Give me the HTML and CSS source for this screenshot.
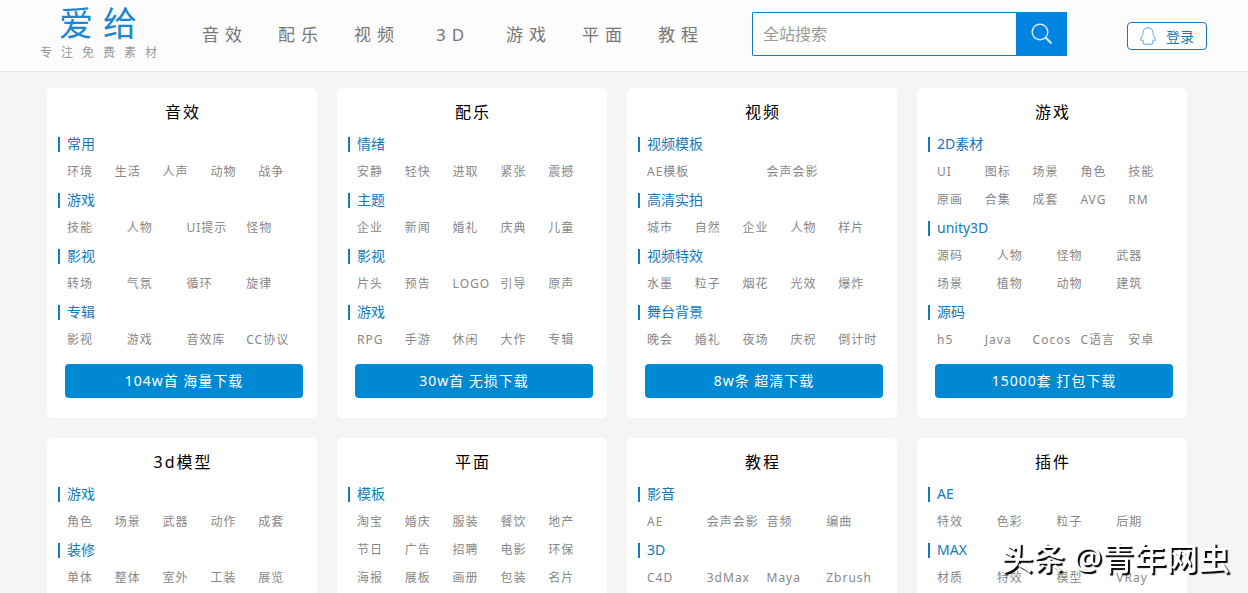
FILE: index.html
```
<!DOCTYPE html>
<html lang="zh-CN">
<head>
  <meta charset="UTF-8" />
  <meta name="viewport" content="width=device-width, initial-scale=1.0"/>
  <title>爱给 - 专注免费素材</title>
  <link rel="stylesheet" href="styles.css">
</head>
<body>

<header class="header">
  <a href="#" class="logo">
    <span class="logo-name">爱给</span>
    <span class="logo-slogan">专注免费素材</span>
  </a>
  <nav class="nav">
    <a href="#">音效</a>
    <a href="#">配乐</a>
    <a href="#">视频</a>
    <a href="#">3D</a>
    <a href="#">游戏</a>
    <a href="#">平面</a>
    <a href="#">教程</a>
  </nav>
  <form class="search">
    <input type="text" placeholder="全站搜索" aria-label="全站搜索">
    <button type="button" aria-label="搜索">
      <svg width="22" height="22" viewBox="0 0 22 22" fill="none" stroke="#d5efff">
        <circle cx="9" cy="9" r="7.8" stroke-width="1.4"/>
        <path d="M14.5 14.5L20.5 20.5" stroke-width="2"/>
      </svg>
    </button>
  </form>
  <button type="button" class="login">
    <svg width="16" height="18" viewBox="0 0 16 18" fill="none" stroke="#5aa5e0">
      <path d="M8 .8C4.900.8 3 2.800 3 5.500V7.500C2.100 9 .8 11 .8 13C.8 14.300 1.500 14.200 2.600 12.800C2.900 13.900 3.400 14.600 4 15.100C2.500 15.700 2.400 17.200 4.300 17.200H11.700C13.600 17.200 13.500 15.700 12 15.100C12.600 14.600 13.100 13.900 13.400 12.800C14.500 14.200 15.200 14.300 15.200 13C15.200 11 13.900 9 13 7.500V5.500C13 2.800 11.100.8 8 .8Z"/>
    </svg>
    登录
  </button>
</header>

<main class="cards">
  <section class="card">
    <h2>音效</h2>
    <h3>常用</h3>
    <div class="links"><a href="#">环境</a><a href="#">生活</a><a href="#">人声</a><a href="#">动物</a><a href="#">战争</a></div>
    <h3>游戏</h3>
    <div class="links four"><a href="#">技能</a><a href="#">人物</a><a href="#">UI提示</a><a href="#">怪物</a></div>
    <h3>影视</h3>
    <div class="links four"><a href="#">转场</a><a href="#">气氛</a><a href="#">循环</a><a href="#">旋律</a></div>
    <h3>专辑</h3>
    <div class="links four"><a href="#">影视</a><a href="#">游戏</a><a href="#">音效库</a><a href="#">CC协议</a></div>
    <a href="#" class="download">104w首 海量下载</a>
  </section>

  <section class="card">
    <h2>配乐</h2>
    <h3>情绪</h3>
    <div class="links"><a href="#">安静</a><a href="#">轻快</a><a href="#">进取</a><a href="#">紧张</a><a href="#">震撼</a></div>
    <h3>主题</h3>
    <div class="links"><a href="#">企业</a><a href="#">新闻</a><a href="#">婚礼</a><a href="#">庆典</a><a href="#">儿童</a></div>
    <h3>影视</h3>
    <div class="links"><a href="#">片头</a><a href="#">预告</a><a href="#">LOGO</a><a href="#">引导</a><a href="#">原声</a></div>
    <h3>游戏</h3>
    <div class="links"><a href="#">RPG</a><a href="#">手游</a><a href="#">休闲</a><a href="#">大作</a><a href="#">专辑</a></div>
    <a href="#" class="download">30w首 无损下载</a>
  </section>

  <section class="card">
    <h2>视频</h2>
    <h3>视频模板</h3>
    <div class="links two"><a href="#">AE模板</a><a href="#">会声会影</a></div>
    <h3>高清实拍</h3>
    <div class="links"><a href="#">城市</a><a href="#">自然</a><a href="#">企业</a><a href="#">人物</a><a href="#">样片</a></div>
    <h3>视频特效</h3>
    <div class="links"><a href="#">水墨</a><a href="#">粒子</a><a href="#">烟花</a><a href="#">光效</a><a href="#">爆炸</a></div>
    <h3>舞台背景</h3>
    <div class="links"><a href="#">晚会</a><a href="#">婚礼</a><a href="#">夜场</a><a href="#">庆祝</a><a href="#">倒计时</a></div>
    <a href="#" class="download">8w条 超清下载</a>
  </section>

  <section class="card">
    <h2>游戏</h2>
    <h3>2D素材</h3>
    <div class="links"><a href="#">UI</a><a href="#">图标</a><a href="#">场景</a><a href="#">角色</a><a href="#">技能</a><a href="#">原画</a><a href="#">合集</a><a href="#">成套</a><a href="#">AVG</a><a href="#">RM</a></div>
    <h3>unity3D</h3>
    <div class="links four"><a href="#">源码</a><a href="#">人物</a><a href="#">怪物</a><a href="#">武器</a><a href="#">场景</a><a href="#">植物</a><a href="#">动物</a><a href="#">建筑</a></div>
    <h3>源码</h3>
    <div class="links"><a href="#">h5</a><a href="#">Java</a><a href="#">Cocos</a><a href="#">C语言</a><a href="#">安卓</a></div>
    <a href="#" class="download">15000套 打包下载</a>
  </section>

  <section class="card">
    <h2>3d模型</h2>
    <h3>游戏</h3>
    <div class="links"><a href="#">角色</a><a href="#">场景</a><a href="#">武器</a><a href="#">动作</a><a href="#">成套</a></div>
    <h3>装修</h3>
    <div class="links"><a href="#">单体</a><a href="#">整体</a><a href="#">室外</a><a href="#">工装</a><a href="#">展览</a></div>
  </section>

  <section class="card">
    <h2>平面</h2>
    <h3>模板</h3>
    <div class="links"><a href="#">淘宝</a><a href="#">婚庆</a><a href="#">服装</a><a href="#">餐饮</a><a href="#">地产</a><a href="#">节日</a><a href="#">广告</a><a href="#">招聘</a><a href="#">电影</a><a href="#">环保</a><a href="#">海报</a><a href="#">展板</a><a href="#">画册</a><a href="#">包装</a><a href="#">名片</a></div>
  </section>

  <section class="card">
    <h2>教程</h2>
    <h3>影音</h3>
    <div class="links four"><a href="#">AE</a><a href="#">会声会影</a><a href="#">音频</a><a href="#">编曲</a></div>
    <h3>3D</h3>
    <div class="links four"><a href="#">C4D</a><a href="#">3dMax</a><a href="#">Maya</a><a href="#">Zbrush</a></div>
  </section>

  <section class="card">
    <h2>插件</h2>
    <h3>AE</h3>
    <div class="links four"><a href="#">特效</a><a href="#">色彩</a><a href="#">粒子</a><a href="#">后期</a></div>
    <h3>MAX</h3>
    <div class="links four"><a href="#">材质</a><a href="#">特效</a><a href="#">模型</a><a href="#">VRay</a></div>
  </section>
</main>

<div class="watermark">头条 @青年网虫</div>

</body>
</html>
```
FILE: styles.css
```
:root {
  --primary: #0089d3;
  --line: #1579be;
  --page: #f5f5f5;
  --text: #888;
}

* {
  box-sizing: border-box;
  margin: 0;
  padding: 0;
}

body {
  height: 100vh;
  overflow: hidden;
  font-family: "Noto Sans", "Noto Sans CJK SC", sans-serif;
  font-size: 12px;
  background: var(--page);
  color: var(--text);
}

a {
  color: inherit;
  text-decoration: none;
}

/* Header */
.header {
  display: flex;
  align-items: flex-start;
  height: 72px;
  padding: 0 41px 0 40px;
  background: #fcfcfc;
  border-bottom: 1px solid #e6e6e6;
}

.logo {
  display: flex;
  flex-direction: column;
  width: 128px;
  padding-top: 1px;
}

.logo-name {
  padding-left: 19px;
  font-size: 34px;
  line-height: 44px;
  letter-spacing: 10px;
  color: #1c86d1;
}

.logo-slogan {
  font-size: 12px;
  line-height: 16px;
  letter-spacing: 9px;
  color: #999;
}

.nav {
  display: flex;
  gap: 30px;
  margin-left: 34px;
  font-size: 17px;
  line-height: 70px;
  letter-spacing: 6px;
  color: #777;
}

.nav a {
  min-width: 46px;
  text-align: center;
}

.search {
  display: flex;
  width: 315px;
  height: 44px;
  margin: 12px 0 0 auto;
}

.search input {
  flex: 1;
  min-width: 0;
  padding: 0 10px;
  border: 1px solid var(--line);
  border-right: none;
  border-radius: 2px 0 0 2px;
  background: #fff;
  font-family: inherit;
  font-size: 16px;
  outline: none;
}

.search input::placeholder {
  color: #999;
}

.search button {
  display: flex;
  align-items: center;
  justify-content: center;
  width: 51px;
  border: none;
  background: #0084e0;
  cursor: pointer;
}

.login {
  display: flex;
  align-items: center;
  justify-content: center;
  gap: 10px;
  width: 80px;
  height: 28px;
  margin: 22px 0 0 60px;
  border: 1px solid var(--line);
  border-radius: 4px;
  background: #fff;
  font-family: inherit;
  font-size: 14px;
  color: var(--line);
  cursor: pointer;
}

/* Category cards */
.cards {
  display: grid;
  grid-template-columns: repeat(4, 1fr);
  gap: 20px;
  padding: 16px 61px 20px 47px;
}

.card {
  padding: 6px 11px 20px;
  border-radius: 5px;
  background: #fff;
}

.card h2 {
  padding-left: 2px;
  font-size: 16px;
  font-weight: 400;
  line-height: 36px;
  letter-spacing: 2px;
  text-align: center;
  color: #000;
}

.card h3 {
  display: flex;
  align-items: center;
  gap: 7px;
  font-size: 14px;
  font-weight: 400;
  line-height: 28px;
  color: var(--line);
}

.card h3::before {
  content: "";
  width: 2px;
  height: 15px;
  background: var(--line);
}

.links {
  display: grid;
  grid-template-columns: repeat(5, 1fr);
  margin-left: 9px;
  line-height: 28px;
  letter-spacing: 1px;
  white-space: nowrap;
}

.links.four {
  grid-template-columns: repeat(4, 1fr);
}

.links.two {
  grid-template-columns: repeat(2, 1fr);
}

.download {
  display: block;
  margin: 10px 3px 0 7px;
  border-radius: 4px;
  background: var(--primary);
  font-size: 14px;
  line-height: 34px;
  letter-spacing: 1px;
  text-align: center;
  color: #fff;
}

.watermark {
  position: fixed;
  right: 18px;
  bottom: 11px;
  font-size: 32px;
  font-weight: 500;
  line-height: 48px;
  color: #fff;
  text-shadow: 2px 2px 1px #000;
}
```
